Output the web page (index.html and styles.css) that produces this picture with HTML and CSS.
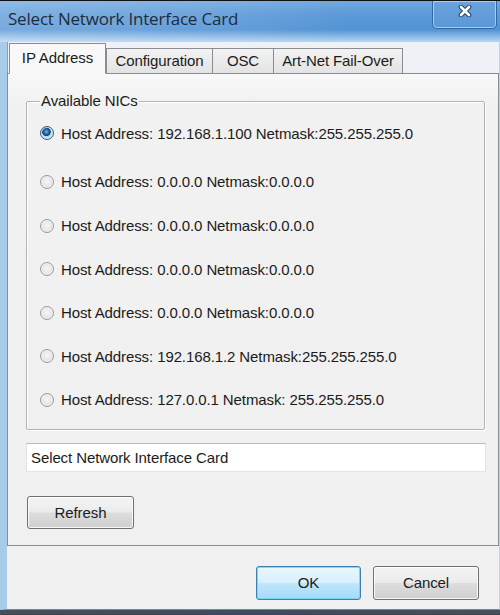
FILE: index.html
```html
<!DOCTYPE html>
<html lang="en">
<head>
<meta charset="utf-8">
<title>Select Network Interface Card</title>
<link rel="stylesheet" href="styles.css">
</head>
<body>
<div class="window">
  <div class="titlebar">
    <span class="title">Select Network Interface Card</span>
    <button class="close" aria-label="Close">
      <svg width="14" height="12" viewBox="0 0 14 12">
        <path d="M3 2 L11 10 M11 2 L3 10" stroke="#2a4867" stroke-width="4.6" stroke-linecap="round"/>
        <path d="M3 2 L11 10 M11 2 L3 10" stroke="#ffffff" stroke-width="2.6" stroke-linecap="round"/>
      </svg>
    </button>
  </div>
  <div class="frame">
    <div class="tabs">
      <div class="tab active tab-ip">IP Address</div>
      <div class="tab tab-config">Configuration</div>
      <div class="tab tab-osc">OSC</div>
      <div class="tab tab-failover">Art-Net Fail-Over</div>
    </div>
    <div class="panel">
      <fieldset class="group">
        <legend>Available NICs</legend>
        <ul class="nics">
          <li class="nic"><span class="radio checked"></span>Host Address: 192.168.1.100 Netmask:255.255.255.0</li>
          <li class="nic"><span class="radio"></span>Host Address: 0.0.0.0 Netmask:0.0.0.0</li>
          <li class="nic"><span class="radio"></span>Host Address: 0.0.0.0 Netmask:0.0.0.0</li>
          <li class="nic"><span class="radio"></span>Host Address: 0.0.0.0 Netmask:0.0.0.0</li>
          <li class="nic"><span class="radio"></span>Host Address: 0.0.0.0 Netmask:0.0.0.0</li>
          <li class="nic"><span class="radio"></span>Host Address: 192.168.1.2 Netmask:255.255.255.0</li>
          <li class="nic"><span class="radio"></span>Host Address: 127.0.0.1 Netmask: 255.255.255.0</li>
        </ul>
      </fieldset>
      <div class="status">Select Network Interface Card</div>
      <button class="btn refresh">Refresh</button>
    </div>
    <div class="footer">
      <button class="btn btn-default ok">OK</button>
      <button class="btn cancel">Cancel</button>
    </div>
  </div>
  <div class="desktop"></div>
</div>
</body>
</html>
```

FILE: styles.css
```css
* {
  box-sizing: border-box;
}

html, body {
  margin: 0;
  padding: 0;
  background: #3d4550;
}

body {
  width: 500px;
  height: 615px;
  overflow: hidden;
  font-family: "Liberation Sans", Arial, sans-serif;
  font-size: 15px;
  letter-spacing: -0.1px;
  color: #1b1b1b;
}

.window {
  display: flex;
  flex-direction: column;
  width: 500px;
}

/* ---- caption bar ---- */
.titlebar {
  height: 42px;
  display: flex;
  justify-content: space-between;
  align-items: flex-start;
  border-top: 1px solid #111;
  background:
    linear-gradient(to right, rgba(255, 255, 255, 0.22) 0, rgba(255, 255, 255, 0.1) 45%, rgba(255, 255, 255, 0) 70%),
    linear-gradient(to bottom, #72a8de 0, #5d9ad8 30%, #5293d5 70%, #8fbbe7 88%, #b9d5f0 100%);
}

.title {
  padding: 7px 0 0 8px;
  font-family: "Open Sans", "Noto Sans", sans-serif;
  font-size: 17px;
  line-height: 22px;
  color: #1e2c3c;
  letter-spacing: -0.2px;
}

.close {
  width: 65px;
  height: 28px;
  margin-right: 3px;
  padding: 0 0 8px;
  display: flex;
  align-items: center;
  justify-content: center;
  border: 1px solid #34679c;
  border-top: none;
  border-radius: 0 0 5px 5px;
  box-shadow: inset 0 0 0 1px rgba(200, 224, 248, 0.7);
  background: linear-gradient(to bottom, #6aa3dc, #5a98d7);
}

/* ---- window body ---- */
.frame {
  display: flex;
  flex-direction: column;
  border-left: 7px solid #a9cbea;
  border-right: 1px solid #b9d3ec;
  border-bottom: 1px solid #7d8896;
  background: #eef1f5;
  box-shadow: inset 1px 0 0 #6fa4d8;
}

.tabs {
  height: 31px;
  display: flex;
  align-items: flex-end;
  padding-left: 2px;
  position: relative;
  z-index: 1;
}

.tab {
  height: 25px;
  line-height: 23px;
  text-align: center;
  border: 1px solid #898c95;
  border-bottom: none;
  margin-left: -1px;
  background: linear-gradient(to bottom, #f2f2f2, #e3e3e3);
  color: #1b1b1b;
  white-space: nowrap;
}

.tab.active {
  height: 31px;
  line-height: 28px;
  margin-left: 0;
  background: #f8f8f8;
  border-bottom: 1px solid #f8f8f8;
  margin-bottom: -1px;
}

.tab.active + .tab {
  margin-left: 0;
}

.tab-ip { width: 97px; }
.tab-config { width: 107px; }
.tab-osc { width: 62px; }
.tab-failover { width: 130px; }

.panel {
  display: flex;
  flex-direction: column;
  align-items: flex-start;
  padding: 0 13px 16px 18px;
  border: 1px solid #898c95;
  background: linear-gradient(to bottom, #f8f8f8 0, #f1f1f1 30px, #f0f0f0 100%);
}

/* ---- NIC group box ---- */
.group {
  align-self: stretch;
  margin: 17px 0 0;
  padding: 11px 0 18px 13px;
  border: 1px solid #b3b3b3;
  border-radius: 2px;
  box-shadow: 1px 1px 0 #fff, inset 1px 1px 0 #fff;
}

.group legend {
  margin-left: 0;
  padding: 0 1px;
  line-height: 20px;
  color: #1b1b1b;
}

.nics {
  list-style: none;
  margin: 0;
  padding: 0;
  display: flex;
  flex-direction: column;
  row-gap: 21.6px;
}

.nic {
  height: 22px;
  display: flex;
  align-items: center;
  gap: 7px;
  white-space: nowrap;
}

.nic:first-child {
  margin-bottom: 5.4px;
}

.radio {
  flex: none;
  width: 14px;
  height: 14px;
  border-radius: 50%;
  border: 1px solid #9a9a9a;
  background: radial-gradient(circle at 50% 45%, #f6f6f6 0, #e9e9e9 45%, #d2d2d2 100%);
  box-shadow: inset 0 0 0 1px rgba(255, 255, 255, 0.6);
}

.radio.checked {
  border-color: #2e5f86;
  background:
    radial-gradient(circle at 45% 40%, #7ab8e8 0, #2a72b5 2px, #10436f 4px, transparent 4.6px),
    radial-gradient(circle, #d6e8f6 0, #b8d4ea 60%, #8fb3d0 100%);
}

/* ---- status text box ---- */
.status {
  align-self: stretch;
  margin: 13px -1px 0 0;
  height: 29px;
  padding-left: 4px;
  line-height: 27px;
  background: #fff;
  border: 1px solid #e2e3ea;
  border-top-color: #b8b9c0;
}

/* ---- push buttons ---- */
.btn {
  font: inherit;
  letter-spacing: inherit;
  color: #1b1b1b;
  padding: 0;
  border: 1px solid #707070;
  border-radius: 3px;
  box-shadow: inset 0 0 0 1px rgba(255, 255, 255, 0.8);
  background: linear-gradient(to bottom, #f4f4f4 0, #ebebeb 48%, #dddddd 52%, #cfcfcf 100%);
}

.refresh {
  margin: 24px 0 0 1px;
  width: 107px;
  height: 33px;
}

.footer {
  height: 63px;
  display: flex;
  justify-content: flex-end;
  align-items: flex-start;
  gap: 12px;
  padding: 20px 20px 0 0;
  background: #f0f0f0;
}

.ok {
  width: 105px;
  height: 34px;
}

.cancel {
  width: 106px;
  height: 34px;
}

.btn-default {
  border-color: #3c7fb1;
  box-shadow: inset 0 0 0 1px rgba(120, 210, 250, 0.9);
  background: linear-gradient(to bottom, #eaf6fd 0, #d9f0fc 48%, #bee6fd 52%, #a7d9f5 100%);
}

.desktop {
  height: 4px;
  background: linear-gradient(to right, #4a4f57 0, #3b4c62 50%, #4a4f57 100%);
}
```
